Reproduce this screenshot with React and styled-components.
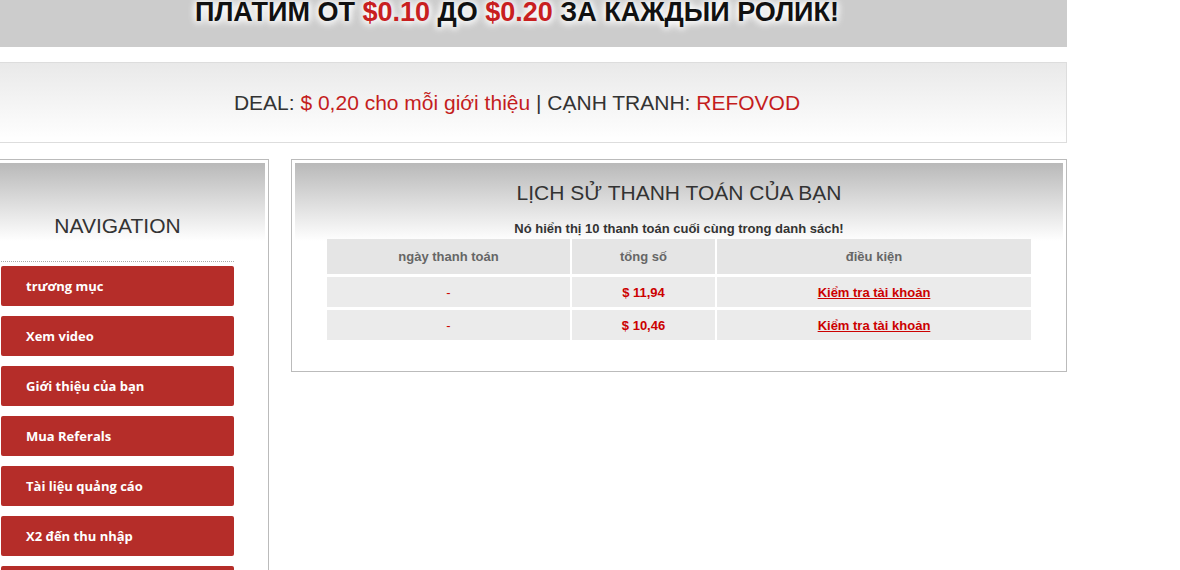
import React from 'react';
import styled, { createGlobalStyle } from 'styled-components';

const GlobalStyle = createGlobalStyle`
  html, body {
    margin: 0;
    padding: 0;
    background: #fff;
    overflow: hidden;
    font-family: 'Liberation Sans', Arial, sans-serif;
  }
`;

const Page = styled.div`
  width: 1100px;
  margin-left: -33px;
`;

const Banner = styled.div`
  height: 47px;
  background: #cccccc;
  text-align: center;
  overflow: hidden;
`;

const BannerTitle = styled.h1`
  margin: -2px 0 0;
  font-size: 27px;
  line-height: 28px;
  font-weight: bold;
  color: #111;
  text-shadow: 0 0 6px #fff, 0 0 10px #fff, 0 2px 8px #fff;
`;

const Red = styled.span`
  color: ${p => p.$tone || '#c8201f'};
`;

const Deal = styled.div`
  margin-top: 15px;
  height: 79px;
  border: 1px solid #dddddd;
  background: linear-gradient(to bottom, #e9e9e9 0%, #ffffff 100%);
  display: flex;
  align-items: center;
  justify-content: center;
  font-size: 21px;
  color: #333;
`;

const Columns = styled.div`
  margin-top: 16px;
  display: flex;
  align-items: flex-start;
  gap: 22px;
`;

const Panel = styled.div`
  width: ${p => p.$width}px;
  box-sizing: border-box;
  border: 1px solid #bbbbbb;
  padding: 3px;
  background: #fff;
`;

const PanelInner = styled.div`
  background: linear-gradient(to bottom, #b9b9b9 0px, #ffffff 78px);
  padding: ${p => p.$pad};
`;

const NavTitle = styled.h2`
  margin: 0;
  font-size: 21px;
  line-height: 24px;
  font-weight: normal;
  color: #333;
  text-align: center;
`;

const NavList = styled.div`
  margin: 23px 0 0;
  border-top: 1px dotted #aaaaaa;
  padding-top: 4px;
  display: flex;
  flex-direction: column;
  gap: 10px;
`;

const NavItem = styled.a`
  display: flex;
  align-items: center;
  height: 40px;
  padding-left: 25px;
  background: #b52d29;
  border-radius: 2px;
  color: #fff;
  font-family: 'Open Sans', sans-serif;
  font-weight: 700;
  font-size: 13px;
  text-decoration: none;
`;

const HistoryTitle = styled.h2`
  margin: 0;
  font-size: 21px;
  line-height: 26px;
  font-weight: normal;
  color: #333;
  text-align: center;
`;

const Note = styled.p`
  margin: 15px 0 2px;
  font-size: 13px;
  line-height: 16px;
  font-weight: bold;
  color: #333;
  text-align: center;
`;

const Grid = styled.div`
  width: 704px;
  margin: 0 auto;
  display: grid;
  grid-template-columns: 243px 143px 314px;
  grid-auto-rows: 30px;
  grid-template-rows: 35px;
  gap: 3px 2px;
`;

const Cell = styled.div`
  display: flex;
  align-items: center;
  justify-content: center;
  font-size: 13px;
  background: ${p => (p.$head ? '#e5e5e5' : '#ebebeb')};
  color: ${p => (p.$head ? '#666' : '#c00')};
  font-weight: ${p => (p.$light ? 'normal' : 'bold')};
`;

const Link = styled.a`
  color: #c00;
  font-weight: bold;
  text-decoration: underline;
`;

const navItems = [
  'trương mục',
  'Xem video',
  'Giới thiệu của bạn',
  'Mua Referals',
  'Tài liệu quảng cáo',
  'X2 đến thu nhập',
  'Rút tiền',
  'Hỗ trợ',
];

const payments = [
  { date: '-', sum: '$ 11,94' },
  { date: '-', sum: '$ 10,46' },
];

export default function App() {
  return (
    <Page>
      <GlobalStyle />
      <Banner>
        <BannerTitle>
          ПЛАТИМ ОТ <Red>$0.10</Red> ДО <Red>$0.20</Red> ЗА КАЖДЫЙ РОЛИК!
        </BannerTitle>
      </Banner>

      <Deal>
        DEAL:&nbsp;<Red $tone="#c41d1d">$ 0,20 cho mỗi giới thiệu</Red>&nbsp;|&nbsp;CẠNH TRANH:&nbsp;
        <Red $tone="#c41d1d">REFOVOD</Red>
      </Deal>

      <Columns>
        <Panel $width={302}>
          <PanelInner $pad="51px 31px 10px 30px">
            <NavTitle>NAVIGATION</NavTitle>
            <NavList>
              {navItems.map(item => (
                <NavItem key={item} href="#">{item}</NavItem>
              ))}
            </NavList>
          </PanelInner>
        </Panel>

        <Panel $width={776}>
          <PanelInner $pad="17px 0 28px">
            <HistoryTitle>LỊCH SỬ THANH TOÁN CỦA BẠN</HistoryTitle>
            <Note>Nó hiển thị 10 thanh toán cuối cùng trong danh sách!</Note>
            <Grid>
              <Cell $head>ngày thanh toán</Cell>
              <Cell $head>tổng số</Cell>
              <Cell $head>điều kiện</Cell>
              {payments.map((p, i) => (
                <React.Fragment key={i}>
                  <Cell $light>{p.date}</Cell>
                  <Cell>{p.sum}</Cell>
                  <Cell><Link href="#">Kiểm tra tài khoản</Link></Cell>
                </React.Fragment>
              ))}
            </Grid>
          </PanelInner>
        </Panel>
      </Columns>
    </Page>
  );
}
